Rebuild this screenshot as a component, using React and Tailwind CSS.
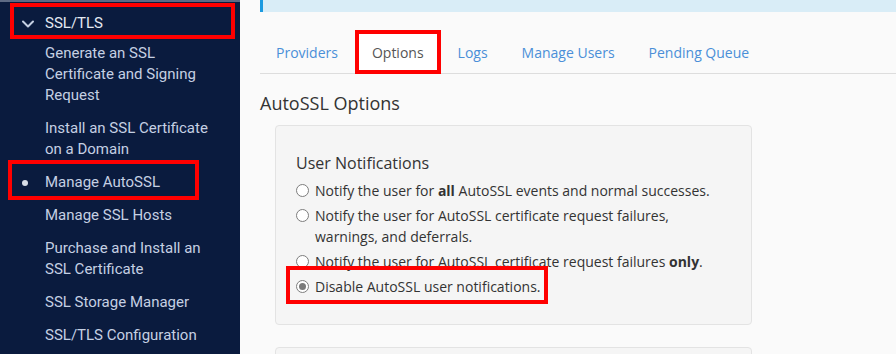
import React from "react";

const sideItems = [
  ["Generate an SSL", "Certificate and Signing", "Request"],
  ["Install an SSL Certificate", "on a Domain"],
  ["Manage AutoSSL"],
  ["Manage SSL Hosts"],
  ["Purchase and Install an", "SSL Certificate"],
  ["SSL Storage Manager"],
  ["SSL/TLS Configuration"],
];

function Radio({ checked }) {
  return (
    <span className="mt-[4px] mr-[6px] flex h-[13px] w-[13px] shrink-0 items-center justify-center rounded-full border border-[#7d7d7d] bg-white">
      {checked && <span className="h-[7px] w-[7px] rounded-full bg-[#7a7a7a]" />}
    </span>
  );
}

export default function App() {
  const tabs = ["Providers", "Options", "Logs", "Manage Users", "Pending Queue"];
  return (
    <div className="flex h-[354px] w-[896px] overflow-hidden bg-[#fafafa]">
      {/* Sidebar */}
      <div className="w-[240px] shrink-0 bg-[#0a1b3e] font-['Roboto',sans-serif] text-[15px] leading-[21px] text-[#c5d0e3]">
        <div className="h-[2px] bg-[#5d6a84]" />
        <div className="relative flex items-center pt-[11px] text-[#e4e9f2]">
          <svg className="ml-[21px] mr-[10px] h-[14px] w-[14px]" viewBox="0 0 14 14" fill="none">
            <path d="M2 4.5l5 5 5-5" stroke="#c5d0e3" strokeWidth="2" strokeLinecap="round" strokeLinejoin="round" />
          </svg>
          <span>SSL/TLS</span>
          <div className="absolute left-[10px] top-[1px] h-[36px] w-[225px] border-[4px] border-[#ff0000]" />
        </div>
        <div className="mt-[3px]">
          {sideItems.map((lines, i) => (
            <div key={i} className="relative py-[6px] pl-[45px]">
              {lines[0] === "Manage AutoSSL" && (
                <>
                  <span className="absolute left-[22px] top-[14px] h-[6px] w-[6px] rounded-full bg-[#d8dee8]" />
                  <div className="absolute left-[8px] top-[-6px] h-[40px] w-[191px] border-[4px] border-[#ff0000]" />
                </>
              )}
              {lines.map((l) => (
                <div key={l}>{l}</div>
              ))}
            </div>
          ))}
        </div>
      </div>

      {/* Main */}
      <div className="flex-1 pl-[20px] font-['Open_Sans',sans-serif] text-[#333333]">
        <div className="h-[12px] border-l-[3px] border-[#1b9ae0] bg-[#d9edf7]" />
        <div className="mt-[20px] flex border-b border-[#dddddd] text-[14px] leading-[20px]">
          {tabs.map((t) => {
            const active = t === "Options";
            return (
              <div
                key={t}
                className={
                  active
                    ? "relative mb-[-1px] mr-[2px] rounded-t-[4px] border border-[#dddddd] border-b-transparent bg-white px-[15px] py-[10px] text-[#555555]"
                    : "mb-[-1px] mr-[2px] border border-transparent px-[15px] py-[10px] text-[#4a8fd8]"
                }
              >
                {t}
                {active && (
                  <div className="absolute left-[-2px] top-[-3px] h-[44px] w-[86px] border-[4px] border-[#ff0000]" />
                )}
              </div>
            );
          })}
        </div>
        <div className="mt-[16px] text-[18px] leading-[26px]">AutoSSL Options</div>
        <div className="ml-[15px] mt-[9px] w-[477px] rounded-[4px] border border-[#e3e3e3] bg-[#f5f5f5] pb-[27px] pl-[20px] pr-[20px] pt-[26px] text-[14px] leading-[21px]">
          <div className="text-[16px] leading-[22px]">User Notifications</div>
          <div className="mt-[5.5px] flex flex-col gap-[4px]">
            <div className="flex items-start">
              <Radio />
              <span>
                Notify the user for <b>all</b> AutoSSL events and normal successes.
              </span>
            </div>
            <div className="flex items-start">
              <Radio />
              <span>Notify the user for AutoSSL certificate request failures, warnings, and deferrals.</span>
            </div>
            <div className="flex items-start">
              <Radio />
              <span>
                Notify the user for AutoSSL certificate request failures <b>only</b>.
              </span>
            </div>
            <div className="relative flex items-start">
              <Radio checked />
              <span>Disable AutoSSL user notifications.</span>
              <div className="absolute left-[-10px] top-[-10px] h-[38px] w-[262px] border-[4px] border-[#ff0000]" />
            </div>
          </div>
        </div>
        <div className="ml-[15px] mt-[22px] h-[40px] w-[477px] rounded-[4px] border border-[#e3e3e3] bg-[#f5f5f5]" />
      </div>
    </div>
  );
}
